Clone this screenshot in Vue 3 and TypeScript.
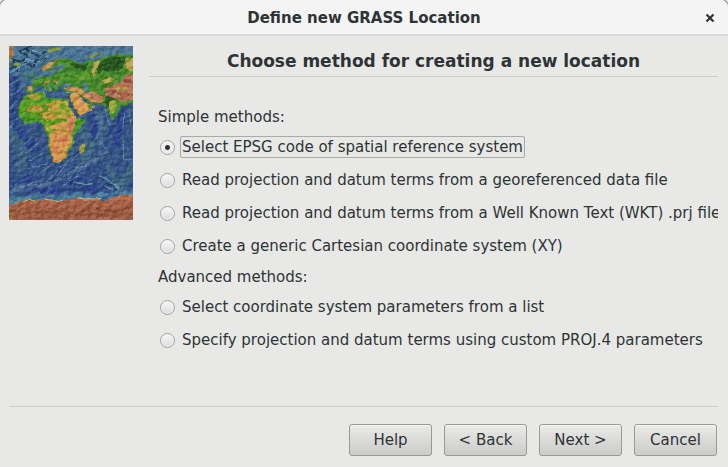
<script setup lang="ts">
import { ref } from 'vue'

interface Method {
  value: string
  label: string
}

interface MethodGroup {
  id: string
  title: string
  methods: Method[]
}

const groups: MethodGroup[] = [
  {
    id: 'simple',
    title: 'Simple methods:',
    methods: [
      { value: 'epsg', label: 'Select EPSG code of spatial reference system' },
      { value: 'file', label: 'Read projection and datum terms from a georeferenced data file' },
      { value: 'wkt', label: 'Read projection and datum terms from a Well Known Text (WKT) .prj file' },
      { value: 'xy', label: 'Create a generic Cartesian coordinate system (XY)' },
    ],
  },
  {
    id: 'advanced',
    title: 'Advanced methods:',
    methods: [
      { value: 'list', label: 'Select coordinate system parameters from a list' },
      { value: 'proj', label: 'Specify projection and datum terms using custom PROJ.4 parameters' },
    ],
  },
]

const buttons: string[] = ['Help', '< Back', 'Next >', 'Cancel']
const selected = ref<string>('epsg')
</script>

<template>
  <div class="window">
    <header class="titlebar">
      <h1 class="title">Define new GRASS Location</h1>
      <button class="close" type="button" aria-label="Close">
        <svg viewBox="0 0 10 10" width="10" height="10" aria-hidden="true">
          <path d="M1.5 1.5 8.5 8.5M8.5 1.5 1.5 8.5" fill="none" stroke="#2e3436" stroke-width="2.2" />
        </svg>
      </button>
    </header>

    <main class="content">
      <svg class="map" viewBox="27 30 372 522" preserveAspectRatio="none" aria-hidden="true">
        <defs>
          <linearGradient id="sea" x1="0" y1="0" x2="0" y2="1">
            <stop offset="0" stop-color="#4b7696" />
            <stop offset="0.17" stop-color="#426d94" />
            <stop offset="0.32" stop-color="#38588a" />
            <stop offset="0.6" stop-color="#345486" />
            <stop offset="0.84" stop-color="#304c8a" />
            <stop offset="0.9" stop-color="#467a98" />
          </linearGradient>
          <linearGradient id="ice" x1="0" y1="0" x2="0" y2="1">
            <stop offset="0" stop-color="#b56c4c" />
            <stop offset="0.75" stop-color="#9c583c" />
            <stop offset="1" stop-color="#ad735a" />
          </linearGradient>
          <filter id="rough" x="-5%" y="-5%" width="110%" height="110%">
            <feTurbulence type="fractalNoise" baseFrequency="0.07" numOctaves="3" seed="4" />
            <feDisplacementMap in="SourceGraphic" scale="9" xChannelSelector="R" yChannelSelector="G" />
          </filter>
          <filter id="soft" x="-20%" y="-20%" width="140%" height="140%">
            <feGaussianBlur stdDeviation="5" result="b" />
            <feTurbulence type="fractalNoise" baseFrequency="0.05" numOctaves="3" seed="9" />
            <feDisplacementMap in="b" scale="30" xChannelSelector="R" yChannelSelector="G" />
          </filter>
          <filter id="relief" x="0" y="0" width="100%" height="100%" color-interpolation-filters="sRGB">
            <feTurbulence type="fractalNoise" baseFrequency="0.06 0.08" numOctaves="3" seed="12" />
            <feColorMatrix values="0 0 0 0 0  0 0 0 0 0  0 0 0 0 0  1 0 0 0 0" />
            <feDiffuseLighting surfaceScale="10" diffuseConstant="0.75" lighting-color="#ffffff">
              <feDistantLight azimuth="225" elevation="42" />
            </feDiffuseLighting>
          </filter>
          <filter id="forest" x="0" y="0" width="100%" height="100%" color-interpolation-filters="sRGB">
            <feTurbulence type="fractalNoise" baseFrequency="0.05" numOctaves="3" seed="21" />
            <feColorMatrix values="0 0 0 0 0.42  0 0 0 0 0.64  0 0 0 0 0.14  7 0 0 0 -3.6" />
          </filter>
          <clipPath id="africa-clip"><use href="#africa" /></clipPath>
          <path id="africa" d="M88 171 130 169 138 176 136 184 152 190 160 184 180 188 202 190 212 212 222 232 232 248 245 250 259 246 252 260 238 277 226 292 220 305 223 325 206 342 204 355 195 367 180 379 165 381 158 374 151 352 144 332 146 307 138 288 133 280 132 267 126 260 113 256 94 262 80 264 68 256 56 238 55 215 59 200 70 187 80 177Z" />
        </defs>

        <rect x="27" y="30" width="372" height="522" fill="url(#sea)" />

        <g filter="url(#soft)" fill="none" stroke-linecap="round">
          <path d="M27 118 48 150 50 205 35 260 60 295 110 340" stroke="#2c4488" stroke-width="26" />
          <path d="M280 235 285 290M365 225 350 320M200 420 250 450 290 465M60 410 110 460 170 472" stroke="#2c408c" stroke-width="24" />
          <path d="M120 30 150 50 190 95M220 50 399 50" stroke="#4d7896" stroke-width="22" opacity="0.8" />
          <path d="M27 280 70 350 60 410M235 280 275 330 250 370M330 400 360 460 399 390" stroke="#416d84" stroke-width="24" opacity="0.8" />
          <path d="M27 465 100 450 165 440 220 405 285 370 315 350" stroke="#4b6b95" stroke-width="12" />
          <path d="M300 330 305 280 295 235" stroke="#4f7795" stroke-width="12" />
          <path d="M27 496 120 484 220 484 399 469" stroke="#4f8aa2" stroke-width="12" />
        </g>

        <g filter="url(#rough)" fill="none">
          <path d="M28 100 55 85 85 60 60 45 95 30M50 108 40 70 70 78 100 92 108 73 135 70M75 38 114 60 140 45" stroke="#1c3852" stroke-width="5" />
          <path d="M30 110 60 90 100 73M40 92 80 70 95 42 125 52M52 52 108 85 145 58" stroke="#75a4b8" stroke-width="3" />
          <path d="M30 145 60 128M33 180 62 160M29 224 48 196M28 278 52 246M70 326 102 300M75 350 120 318M84 376 135 348M80 400 145 380M110 420 150 390M140 438 205 370M170 420 218 360M45 465 105 436M183 455 245 410M205 429 245 379M215 374 233 355M235 407 285 361M270 329 295 296M318 340 293 310" stroke="#5f8ca4" stroke-width="3" />
          <path d="M27 463 80 448 140 444 178 430 210 408 255 391 288 370 329 358" stroke="#8795b0" stroke-width="3" opacity="0.5" />
          <path d="M369 310 371 371 386 372 397 368M374 230 368 279M316 216 321 245 329 267M388 219 393 260" stroke="#6497aa" stroke-width="3" />
          <path d="M300 420 322 430 335 442 352 452 360 463M313 449 340 463M219 438 253 444M240 452 278 442M188 482 205 472" stroke="#5f92a6" stroke-width="5" />
          <path d="M307 430 331 447 353 460M222 445 250 451" stroke="#1b3655" stroke-width="3" />
        </g>

        <g filter="url(#rough)">
          <path d="M24 29 45 30 36 42 43 55 34 72 24 76Z" fill="#b98248" />
          <path d="M24 56 34 61 26 81ZM42 82 60 80 63 87 52 91 39 88Z" fill="#7b9a35" />
          <path d="M140 42 160 38 170 34 184 39 166 45 148 50ZM262 67 277 57 302 51 313 50 287 59 273 67Z" fill="#8a9e30" />
          <path d="M93 104 98 102 99 112 107 125 93 128 97 117ZM79 116 88 112 87 123 77 127Z" fill="#458a32" />
          <path d="M122 99 136 84 155 73 183 66 212 69 227 77 203 85 181 83 167 91 162 106 150 113 142 102 128 107Z" fill="#52902d" />
          <path d="M78 150 100 149 94 136 104 131 121 122 134 121 151 119 166 112 180 100 201 94 184 88 187 77 206 70 226 78 250 83 262 72 283 76 307 66 312 60 338 61 350 52 369 57 405 55 405 206 387 200 378 210 367 208 353 231 338 253 327 234 318 212 305 205 284 205 262 197 244 181 213 170 190 167 186 159 207 151 196 142 177 149 174 163 162 160 154 149 143 143 152 155 160 164 149 169 137 152 120 146 108 153 102 167 85 169 77 164Z" fill="#458d29" />
          <use href="#africa" fill="#4b9a20" />
          <path d="M209 181 215 171 228 168 245 185 256 198 264 205 276 202 284 213 272 224 258 230 240 239 234 234 224 215 213 198Z" fill="#d69b49" />
          <path d="M253 319 257 330 247 351 239 352 237 341 243 328Z" fill="#a5a433" />
        </g>

        <g clip-path="url(#africa-clip)">
          <g filter="url(#rough)">
            <path d="M82 178 109 171 125 180 105 193 90 187ZM140 202 174 192 191 211 170 232 143 221ZM76 225 93 211 121 208 133 224 105 232ZM121 232 157 226 184 246 159 255 131 247Z" fill="#cf983c" />
            <path d="M160 196 201 195 214 225 228 243 190 250 165 240Z" fill="#cda33f" />
            <path d="M210 235 229 241 222 267 216 307 219 325 202 340 198 362 178 380 160 378 148 327 149 291 165 280 158 264 183 258 198 244Z" fill="#dc9750" />
            <path d="M135 255 151 250 147 268 164 267 162 285 145 289 137 278Z" fill="#d0a83d" />
            <path d="M211 241 227 246 216 265 219 288 207 297 205 267ZM178 305 204 301 195 317 176 322ZM159 334 175 330 171 350 156 351Z" fill="#cc7757" />
            <path d="M77 207 97 198 115 202 99 211ZM60 220 74 218 73 237ZM177 208 196 199 200 218 185 224Z" fill="#6ba326" />
            <path d="M132 258 150 259 170 252 202 256M146 286 168 279M215 290 221 320 203 344" fill="none" stroke="#5aa51f" stroke-width="6" />
          </g>
          <rect x="50" y="165" width="160" height="125" filter="url(#forest)" opacity="0.7" />
        </g>

        <g filter="url(#rough)">
          <path d="M124 99 144 82 175 69 163 80 154 91 137 104ZM80 151 98 151 97 164 84 163ZM135 136 151 132 147 141 132 143ZM163 132 177 138 169 145ZM190 158 219 151 240 156 257 170 277 167 297 174 310 190 305 202 276 198 249 179 222 165 195 164Z" fill="#cf955a" />
          <path d="M262 168 290 178 313 181 304 195 278 192ZM307 155 329 155 341 143 361 140 378 116 405 111 405 195 385 193 367 199 351 190 327 187 310 175 325 168Z" fill="#ba7658" />
          <path d="M223 173 243 190 264 209 280 212 257 224 239 231 231 215Z" fill="#e1a259" />
          <path d="M262 207 274 204 282 213 268 222Z" fill="#56992a" />
          <path d="M322 195 341 191 351 201 341 233 331 229 326 211Z" fill="#a5ae3c" />
          <path d="M343 157 374 151 390 159 359 164ZM376 68 399 66 400 103 386 104 376 90ZM302 136 330 123 345 129 320 144ZM282 77 301 73 293 98 280 124 278 106Z" fill="#b9a548" />
          <path d="M304 75 337 63 354 59 376 64 369 98 340 105 306 104 296 117 289 99ZM206 80 245 86 268 84 256 102 228 98ZM319 181 339 182 347 190 329 194 325 218 313 196Z" fill="#27561d" />
          <path d="M215 113 244 117 264 109 273 121 256 136 235 128ZM100 135 120 128 132 132 116 138ZM175 126 192 119 211 127 191 136Z" fill="#5f9d2c" />
          <path d="M319 165 339 160 364 171 380 166 391 179 362 177ZM367 130 391 129 399 142 378 142Z" fill="#96553f" />
          <path d="M244 140 257 137 265 151 269 170 259 169 250 153ZM187 142 212 142 218 151 202 150ZM151 97 158 93 162 107 151 112Z" fill="#507d9b" />
          <path d="M246 182 256 191 266 198 265 204 249 193ZM205 192 212 200 220 213 232 234 224 234 213 216Z" fill="#345781" />
          <path d="M148 153 156 165M135 150 136 161M129 164 134 168M199 169 207 169" stroke="#92a844" stroke-width="4" />
        </g>

        <g filter="url(#rough)">
          <path d="M20 511 64 495 112 492 145 492 188 496 210 489 234 486 258 490 302 489 311 498 330 487 354 481 376 478 405 477 405 560 20 560Z" fill="url(#ice)" />
          <path d="M64 493 105 494M132 490 187 494M231 485 254 489 302 488" fill="none" stroke="#c9ba69" stroke-width="3" />
          <path d="M80 530 171 527 192 540 280 520 350 528 399 508" fill="none" stroke="#8e4a32" stroke-width="4" />
        </g>
        <rect class="shade" x="27" y="30" width="372" height="522" filter="url(#relief)" />
      </svg>

      <section class="page">
        <h2 class="heading">Choose method for creating a new location</h2>
        <div class="choices">
          <div v-for="group in groups" :key="group.id" role="radiogroup" :aria-labelledby="group.id">
            <p :id="group.id" class="group-title">{{ group.title }}</p>
            <label v-for="method in group.methods" :key="method.value" class="choice">
              <input v-model="selected" class="radio" type="radio" name="method" :value="method.value" />
              <span class="choice-text">{{ method.label }}</span>
            </label>
          </div>
        </div>
      </section>
    </main>

    <footer class="actions">
      <button v-for="name in buttons" :key="name" class="action" type="button">{{ name }}</button>
    </footer>
  </div>
</template>

<style>
body {
  background: #e8e8e6;
}
</style>

<style scoped>
.window {
  box-sizing: border-box;
  display: flex;
  flex-direction: column;
  min-height: 100vh;
  overflow: hidden;
  border-radius: 7px 7px 0 0;
  box-shadow: 0 0 0 1px #929292;
  background: #e8e8e6;
  color: #2e3436;
  font: 15px/20px "DejaVu Sans", sans-serif;
}

.titlebar {
  display: grid;
  grid-template-columns: 26px 1fr 26px;
  align-items: center;
  height: 32px;
  padding: 2px 5px 0;
  border-bottom: 2px solid #dadada;
  background: #f4f4f4;
}

.title {
  grid-column: 2;
  margin: 0;
  font-size: 15px;
  line-height: 20px;
  text-align: center;
}

.close {
  display: grid;
  place-items: center;
  height: 26px;
  padding: 0;
  border: 0;
  background: none;
}

.content {
  display: flex;
  gap: 16px;
  padding: 10px 10px 0 9px;
}

.map {
  flex: none;
  width: 124px;
  height: 174px;
  isolation: isolate;
}

.shade {
  mix-blend-mode: hard-light;
  opacity: 0.22;
}

.page {
  flex: 1;
  min-width: 0;
}

.heading {
  margin: 0;
  border-bottom: 1px solid #cdcdcb;
  font-size: 17px;
  line-height: 30px;
  text-align: center;
}

.choices {
  padding: 26px 0 0 9px;
  overflow: hidden;
}

.group-title {
  margin: 0;
  line-height: 28px;
}

.choice {
  display: flex;
  align-items: center;
  gap: 5px;
  height: 33px;
  padding-left: 2px;
  white-space: nowrap;
}

.radio {
  flex: none;
  appearance: none;
  width: 15px;
  height: 15px;
  margin: 0;
  border: 1px solid #a0a29f;
  border-radius: 50%;
  background: linear-gradient(#f8f8f8, #dcdcdc);
  box-shadow: inset 0 0 0 1px #f4f4f4;
}

.radio:checked {
  background: radial-gradient(circle, #2e3436 2px, transparent 3px), linear-gradient(#f8f8f8, #e4e4e4);
}

.choice-text {
  margin-bottom: 1px;
  padding: 0 1px;
  border: 1px solid transparent;
  border-radius: 2px;
}

.radio:checked + .choice-text {
  border-color: #a9aba8;
}

.actions {
  display: flex;
  justify-content: flex-end;
  gap: 12px;
  margin: auto 10px 0 9px;
  padding: 17px 1px 11px;
  border-top: 1px solid #cdcdcb;
}

.action {
  width: 83px;
  height: 32px;
  padding: 0;
  border: 1px solid #989a97;
  border-radius: 3px;
  background: linear-gradient(#eaeae9, #cbcbca);
  box-shadow: inset 0 1px #f6f6f6;
  color: inherit;
  font: inherit;
}
</style>
